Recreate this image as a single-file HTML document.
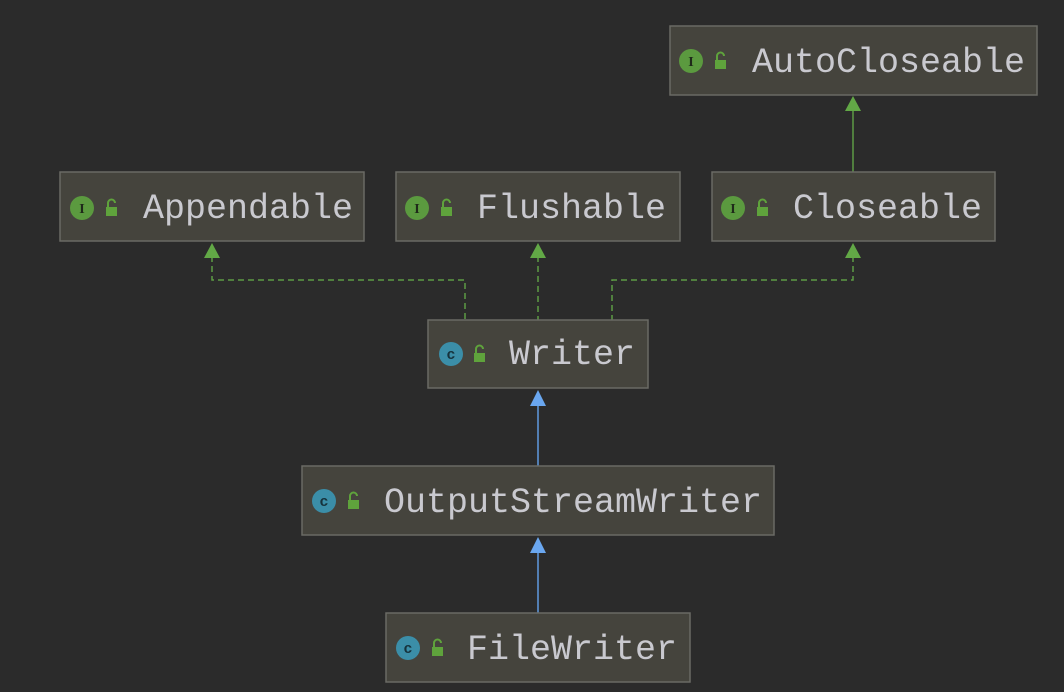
<!DOCTYPE html>
<html><head><meta charset="utf-8"><style>
html,body{margin:0;padding:0;background:#2b2b2b;width:1064px;height:692px;overflow:hidden}
svg text{font-family:"Liberation Mono",monospace}
</style></head><body>
<svg width="1064" height="692" viewBox="0 0 1064 692" xmlns="http://www.w3.org/2000/svg">
<defs>
<g id="lock"><rect x="-6" y="-2" width="11" height="9" fill="#5fa33c"/><path d="M-4,-2 v-4 a3.5,3.5 0 0 1 7,0" fill="none" stroke="#5fa33c" stroke-width="2"/></g>
<g id="ico"><circle r="12" fill="#5b9a3f"/><text x="0" y="5" font-size="14" text-anchor="middle" fill="#1f2a1a" font-weight="bold" style="font-family:'Liberation Serif',serif">I</text></g>
<g id="icc"><circle r="12" fill="#3b8ea8"/><text x="0" y="5" font-size="15" text-anchor="middle" fill="#16323c" font-weight="bold">c</text></g>
</defs>
<g stroke="#5d9b44" stroke-width="1.5" fill="none">
<line x1="853" y1="108" x2="853" y2="172"/>
<path d="M212,256 V280 H465 V320" stroke-dasharray="6,4"/>
<path d="M538,256 V320" stroke-dasharray="6,4"/>
<path d="M853,256 V280 H612 V320" stroke-dasharray="6,4"/>
</g>
<g fill="#62a846">
<path d="M853,96 l-8,15 h16z"/><path d="M212,243 l-8,15 h16z"/><path d="M538,243 l-8,15 h16z"/><path d="M853,243 l-8,15 h16z"/>
</g>
<g stroke="#5f9be0" stroke-width="1.5"><line x1="538" y1="400" x2="538" y2="466"/><line x1="538" y1="548" x2="538" y2="613"/></g>
<g fill="#6aa7f0"><path d="M538,390 l-8,16 h16z"/><path d="M538,537 l-8,16 h16z"/></g>
<g fill="#45443d" stroke="#6a6a64" stroke-width="1.5">
<rect x="670" y="26" width="367" height="69"/>
<rect x="60" y="172" width="304" height="69"/>
<rect x="396" y="172" width="284" height="69"/>
<rect x="712" y="172" width="283" height="69"/>
<rect x="428" y="320" width="220" height="68"/>
<rect x="302" y="466" width="472" height="69"/>
<rect x="386" y="613" width="304" height="69"/>
</g>
<g fill="#c9c9cf" font-size="35">
<text x="752" y="72">AutoCloseable</text>
<text x="143" y="218">Appendable</text>
<text x="477" y="218">Flushable</text>
<text x="793" y="218">Closeable</text>
<text x="509" y="364">Writer</text>
<text x="384" y="512">OutputStreamWriter</text>
<text x="467" y="659">FileWriter</text>
</g>
<use href="#ico" x="691" y="61"/><use href="#lock" x="721" y="62"/>
<use href="#ico" x="82" y="208"/><use href="#lock" x="112" y="209"/>
<use href="#ico" x="417" y="208"/><use href="#lock" x="447" y="209"/>
<use href="#ico" x="733" y="208"/><use href="#lock" x="763" y="209"/>
<use href="#icc" x="451" y="354"/><use href="#lock" x="480" y="355"/>
<use href="#icc" x="324" y="501"/><use href="#lock" x="354" y="502"/>
<use href="#icc" x="408" y="648"/><use href="#lock" x="438" y="649"/>
</svg>
</body></html>
